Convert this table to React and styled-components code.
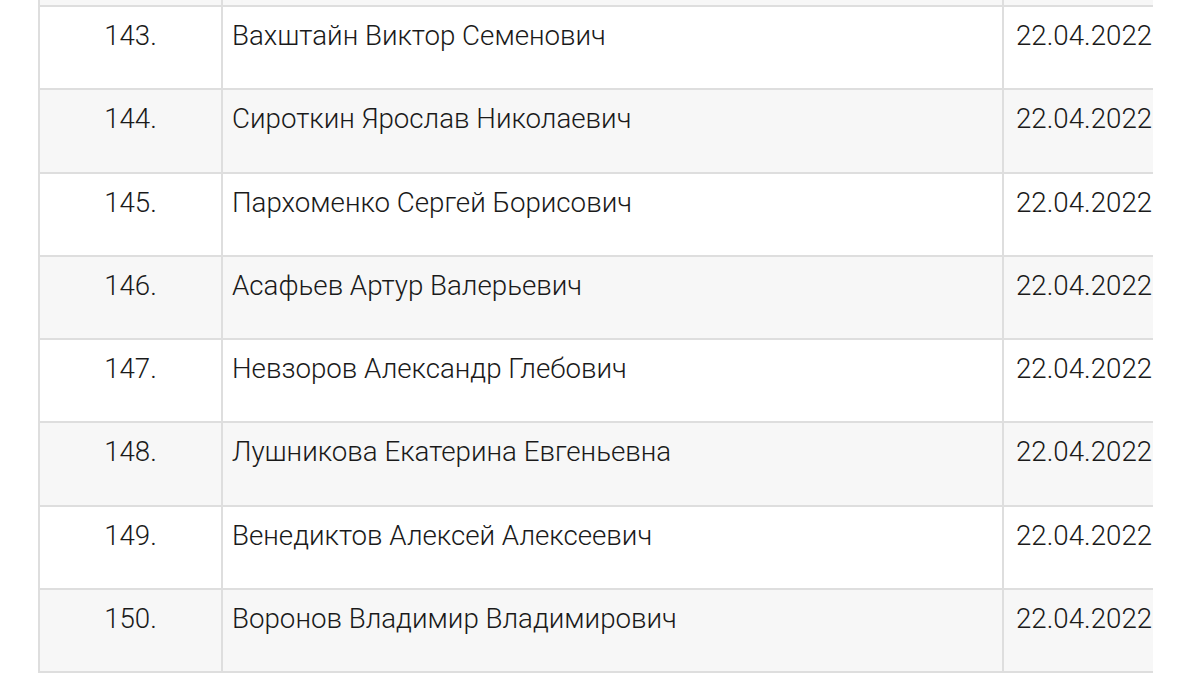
import React from "react";
import styled, { createGlobalStyle } from "styled-components";

const GlobalStyle = createGlobalStyle`
  html, body {
    margin: 0;
    padding: 0;
    background: #ffffff;
  }
  body {
    font-family: Roboto, "Noto Sans", "Liberation Sans", sans-serif;
    color: #1f1f1f;
  }
`;

const Page = styled.div`
  width: 1200px;
  height: 688px;
  overflow: hidden;
  background: #ffffff;
`;

const TableWrap = styled.div`
  margin-left: 38px;
  width: 1113px;
  overflow: hidden;
  border-left: 2px solid #dedede;
`;

const Row = styled.div`
  display: grid;
  grid-template-columns: 183px 781px 320px;
  width: 1284px;
  height: ${(p) => (p.$stub ? "7px" : "83.3px")};
  box-sizing: border-box;
  border-bottom: 2px solid #dedede;
  background: ${(p) => (p.$shaded ? "#f7f7f7" : "#ffffff")};
`;

const Cell = styled.div`
  box-sizing: border-box;
  border-right: 2px solid #dedede;
  padding: 12px 0 0 ${(p) => p.$pad || 0}px;
  text-align: ${(p) => p.$align || "left"};
  font-size: 27.7px;
  font-weight: 300;
  line-height: normal;
  color: #1a1a1a;
  white-space: nowrap;
  overflow: hidden;
`;

const rows = [
  ["143.", "Вахштайн Виктор Семенович"],
  ["144.", "Сироткин Ярослав Николаевич"],
  ["145.", "Пархоменко Сергей Борисович"],
  ["146.", "Асафьев Артур Валерьевич"],
  ["147.", "Невзоров Александр Глебович"],
  ["148.", "Лушникова Екатерина Евгеньевна"],
  ["149.", "Венедиктов Алексей Алексеевич"],
  ["150.", "Воронов Владимир Владимирович"],
];

export default function App() {
  return (
    <Page>
      <GlobalStyle />
      <TableWrap>
        <Row $stub $shaded>
          <Cell />
          <Cell />
          <Cell />
        </Row>
        {rows.map(([num, name], i) => (
          <Row key={num} $shaded={i % 2 === 1}>
            <Cell $align="center">{num}</Cell>
            <Cell $pad={9}>{name}</Cell>
            <Cell $pad={12}>22.04.2022</Cell>
          </Row>
        ))}
      </TableWrap>
    </Page>
  );
}
